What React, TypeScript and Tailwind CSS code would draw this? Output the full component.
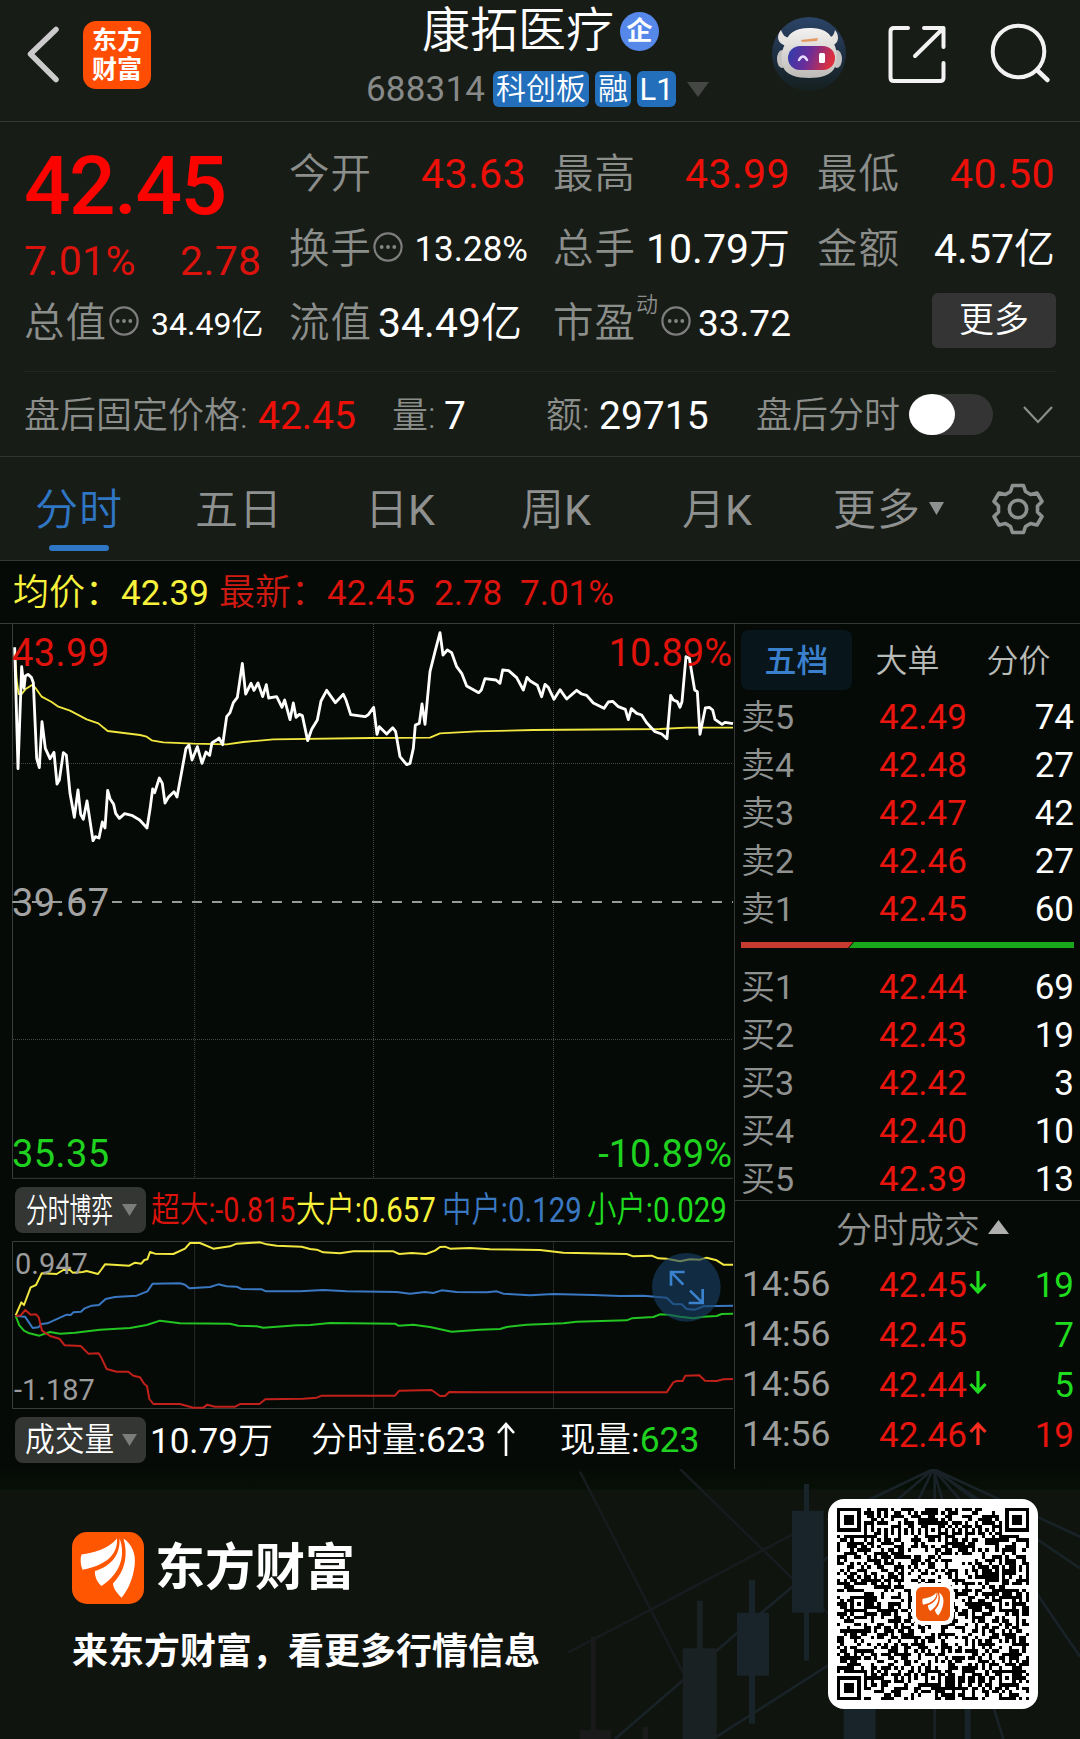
import React from "react";

type Tone = "red" | "green" | "white";

const toneClass: Record<Tone, string> = {
  red: "text-[#e8140e]",
  green: "text-[#1fdc1f]",
  white: "text-white",
};

const asks = [
  ["卖5", "42.49", "74"],
  ["卖4", "42.48", "27"],
  ["卖3", "42.47", "42"],
  ["卖2", "42.46", "27"],
  ["卖1", "42.45", "60"],
];

const bids = [
  ["买1", "42.44", "69"],
  ["买2", "42.43", "19"],
  ["买3", "42.42", "3"],
  ["买4", "42.40", "10"],
  ["买5", "42.39", "13"],
];

const trades: { price: string; dir: "up" | "down" | ""; qty: string; tone: Tone }[] = [
  { price: "42.45", dir: "down", qty: "19", tone: "green" },
  { price: "42.45", dir: "", qty: "7", tone: "green" },
  { price: "42.44", dir: "down", qty: "5", tone: "green" },
  { price: "42.46", dir: "up", qty: "19", tone: "red" },
];

const QR_SIZE = 57;

/* Module grid of a version 10 code: finders, timing, alignment marks and data. */
function qrPath(): string {
  const n = QR_SIZE;
  const cells: number[][] = [];
  let seed = 20240611;
  const rnd = () => {
    seed = (seed * 1103515245 + 12345) % 2147483648;
    return seed / 2147483648;
  };
  for (let y = 0; y < n; y++) {
    cells.push([]);
    for (let x = 0; x < n; x++) cells[y].push(rnd() < 0.5 ? 1 : 0);
  }
  for (let i = 0; i < n; i++) {
    cells[6][i] = i % 2 === 0 ? 1 : 0;
    cells[i][6] = i % 2 === 0 ? 1 : 0;
  }
  const ring = (cx: number, cy: number, r: number, dark: (d: number) => boolean) => {
    for (let y = cy - r; y <= cy + r; y++)
      for (let x = cx - r; x <= cx + r; x++)
        if (y >= 0 && x >= 0 && y < n && x < n)
          cells[y][x] = dark(Math.max(Math.abs(x - cx), Math.abs(y - cy))) ? 1 : 0;
  };
  const marks = [6, 28, 50];
  marks.forEach((cy) =>
    marks.forEach((cx) => {
      ring(cx, cy, 2, (d) => d !== 1);
    }),
  );
  [
    [3, 3],
    [n - 4, 3],
    [3, n - 4],
  ].forEach(([cx, cy]) => ring(cx, cy, 4, (d) => d < 2 || d === 3));
  let d = "";
  for (let y = 0; y < n; y++)
    for (let x = 0; x < n; x++) if (cells[y][x]) d += `M${x} ${y}h1v1h-1z`;
  return d;
}

const qrData = qrPath();

/* Latin letters and digits take the regular weight, ideographs keep the lighter one. */
function Mix({ text }: { text: string }) {
  return (
    <>
      {text.split(/([0-9A-Z.%:\-]+)/).map((part, i) =>
        i % 2 === 1 ? (
          <span key={i} className="font-normal">
            {part}
          </span>
        ) : (
          part
        ),
      )}
    </>
  );
}

function Feather({ className }: { className?: string }) {
  return (
    <svg viewBox="0 0 72 72" className={className} fill="#fff">
      <path d="M10.500 37.700C8.500 33 8 27 9.500 22.500C22 20.500 35 18 45 6.500C46 20 37 33 10.500 37.700Z" />
      <path d="M47.500 6.500C53 20 51 40 29.500 54C25 50 22.500 44.500 23 39C40 34 48.500 22 47.500 6.500Z" />
      <path d="M51.500 6.500C60 12 64 22 62.700 33C61 47 56 58 49.500 65.800C45 61 41.500 57 41 51.500C54 38 56 22 51.500 6.500Z" />
    </svg>
  );
}

function Info() {
  return (
    <svg viewBox="0 0 30 30" className="size-[30px] shrink-0">
      <circle cx="15" cy="15" r="13.600" fill="none" stroke="#7e7e7e" strokeWidth="2.200" />
      <circle cx="8.700" cy="15" r="1.900" fill="#858585" />
      <circle cx="15" cy="15" r="1.900" fill="#858585" />
      <circle cx="21.300" cy="15" r="1.900" fill="#858585" />
    </svg>
  );
}

function Triangle({ className }: { className: string }) {
  return (
    <svg viewBox="0 0 10 10" preserveAspectRatio="none" className={className}>
      <path d="M0 0H10L5 10Z" fill="currentColor" />
    </svg>
  );
}

function Robot() {
  return (
    <svg viewBox="0 0 76 76" className="size-[76px]">
      <defs>
        <linearGradient id="disc" x1="0" y1="0" x2="0" y2="1">
          <stop offset="0" stopColor="#2b4468" />
          <stop offset="0.600" stopColor="#1c2c3c" />
          <stop offset="1" stopColor="#15201f" />
        </linearGradient>
        <linearGradient id="visor" x1="0" y1="0" x2="1" y2="0.200">
          <stop offset="0" stopColor="#2b3eae" />
          <stop offset="0.500" stopColor="#6a2d98" />
          <stop offset="1" stopColor="#dc3040" />
        </linearGradient>
        <linearGradient id="shell" x1="0" y1="0" x2="0" y2="1">
          <stop offset="0" stopColor="#f4f2f0" />
          <stop offset="1" stopColor="#bdbab8" />
        </linearGradient>
      </defs>
      <circle cx="38" cy="38" r="37" fill="url(#disc)" />
      <path d="M10 14C5 20 6 28 16 30L21 22C14 22 12 19 10 14Z" fill="#e5e2df" />
      <path d="M64 14C69 20 68 28 60 30L55 22C61 22 63 19 64 14Z" fill="#e5e2df" />
      <ellipse cx="11" cy="43" rx="5" ry="9" fill="#c4c2c0" />
      <ellipse cx="66" cy="43" rx="5" ry="9" fill="#c4c2c0" />
      <path
        d="M38 12C54 12 60 17 63 28C66 34 67 42 64 51C61 59 50 62 38 62C26 62 15 59 12 51C9 42 11 34 14 28C17 17 24 12 38 12Z"
        fill="url(#shell)"
      />
      <path d="M30 24L47 22L46 25L31 26Z" fill="#e39a62" />
      <rect x="17" y="30" width="47" height="24" rx="12" fill="url(#visor)" />
      <path d="M28 44Q32 37 36 44" fill="none" stroke="#e6dcff" strokeWidth="2.500" strokeLinecap="round" />
      <rect x="48" y="37" width="6" height="10" rx="1.500" fill="#fff" />
    </svg>
  );
}

function Header() {
  return (
    <header className="relative flex h-[122px] items-start border-b border-[#343834] bg-[#181c17]">
      <svg viewBox="0 0 40 60" className="mt-6 ml-[23px] h-[60px] w-10" fill="none">
        <path d="M33 5.500L7.500 30L33 55.500" stroke="#cbcbcb" strokeWidth="5.500" strokeLinecap="round" strokeLinejoin="round" />
      </svg>
      <div className="mt-[21px] ml-5 flex h-[68px] w-[68px] flex-col items-center justify-center rounded-[13px] bg-[#ff4e04] text-[25px] leading-[29px] font-bold text-white">
        <span>东方</span>
        <span>财富</span>
      </div>
      <div className="ml-[214px] flex w-[360px] flex-col">
        <div className="flex h-[62px] items-center pl-[57px] text-[48px] leading-none">
          <span className="w-[192px] whitespace-nowrap text-white">康拓医疗</span>
          <span className="ml-[6px] flex size-[39px] items-center justify-center rounded-full bg-[#5688ea] text-[26px] font-bold text-white">
            企
          </span>
        </div>
        <div className="mt-[9px] flex h-[36px] items-center text-[30px] leading-none text-white">
          <span className="w-[128px] pl-px text-[35px] tracking-[0.2px] text-[#878a88]">
            <Mix text="688314" />
          </span>
          <span className="flex h-9 w-24 items-center justify-center rounded-md bg-[#236fbb]">科创板</span>
          <span className="ml-1.5 flex h-9 w-9 items-center justify-center rounded-md bg-[#236fbb]">融</span>
          <span className="ml-1.5 flex h-9 w-[39px] items-center justify-center rounded-md bg-[#236fbb] text-[31px]">
            <Mix text="L1" />
          </span>
          <Triangle className="ml-[11px] h-[15px] w-[22px] text-[#454745]" />
        </div>
      </div>
      <div className="mt-4 ml-[46px] flex items-start">
        <Robot />
      </div>
      <svg viewBox="0 0 64 64" className="mt-[22px] ml-9 size-16" fill="none" stroke="#f2f2f2" strokeWidth="4" strokeLinecap="round">
        <path d="M25 6H11Q7.500 6 7.500 9.500V55.500Q7.500 59 11 59H57Q60.500 59 60.500 56V41" />
        <path d="M41 6H60.500V25M60 6.500L32 34" strokeLinejoin="round" />
      </svg>
      <svg viewBox="0 0 64 64" className="mt-[22px] ml-[42px] size-16" fill="none" stroke="#f2f2f2" strokeLinecap="round">
        <circle cx="29.500" cy="29.500" r="25.800" strokeWidth="4" />
        <path d="M48 48L58.500 58" strokeWidth="4.500" />
      </svg>
    </header>
  );
}

function Label({ children }: { children: React.ReactNode }) {
  return (
    <span className="w-[83px] shrink-0 text-[40.500px] tracking-[1px] whitespace-nowrap text-[#8b8e8b]">{children}</span>
  );
}

function Quote() {
  return (
    <section className="h-[335px] border-b border-[#313431] bg-[#181c17] px-6 leading-none">
      <div className="grid h-[249px] grid-cols-[265px_264px_264px_239px] grid-rows-[105px_45px_99px]">
        <div className="flex items-center pt-[22px] text-[82px] font-medium tracking-[-1.500px] text-[#fb0400]">42.45</div>
        <div className="flex items-center">
          <Label>今开</Label>
          <span className="w-[154px] text-right text-[41px] tracking-[0.4px] text-[#ec1008]">
            <Mix text="43.63" />
          </span>
        </div>
        <div className="flex items-center">
          <Label>最高</Label>
          <span className="w-[154px] text-right text-[41px] tracking-[0.4px] text-[#ec1008]">
            <Mix text="43.99" />
          </span>
        </div>
        <div className="flex items-center">
          <Label>最低</Label>
          <span className="w-[155px] text-right text-[41px] tracking-[0.4px] text-[#ec1008]">
            <Mix text="40.50" />
          </span>
        </div>
        <div className="flex items-start pt-[14px] text-[41px] tracking-[0.4px] text-[#dc120c]">
          <span className="w-[156px]">
            <Mix text="7.01%" />
          </span>
          <span>
            <Mix text="2.78" />
          </span>
        </div>
        <div className="flex items-center">
          <Label>换手</Label>
          <span className="mb-1.5 ml-px flex">
            <Info />
          </span>
          <span className="w-[125px] text-right text-[35px] text-white">
            <Mix text="13.28%" />
          </span>
        </div>
        <div className="flex items-center">
          <Label>总手</Label>
          <span className="w-[154px] text-right text-[41px] whitespace-nowrap text-white">
            <Mix text="10.79万" />
          </span>
        </div>
        <div className="flex items-center">
          <Label>金额</Label>
          <span className="w-[155px] text-right text-[41px] whitespace-nowrap text-white">
            <Mix text="4.57亿" />
          </span>
        </div>
        <div className="flex items-center pt-1">
          <Label>总值</Label>
          <span className="mb-1.5 ml-0.5 flex">
            <Info />
          </span>
          <span className="ml-3 text-[32px] whitespace-nowrap text-white">
            <Mix text="34.49亿" />
          </span>
        </div>
        <div className="flex items-center pt-1">
          <Label>流值</Label>
          <span className="ml-1.5 text-[41px] whitespace-nowrap text-white">
            <Mix text="34.49亿" />
          </span>
        </div>
        <div className="flex items-center pt-1">
          <Label>市盈</Label>
          <span className="mb-[38px] w-[25px] text-[22px] text-[#8b8e8b]">动</span>
          <span className="mb-1.5 flex">
            <Info />
          </span>
          <span className="ml-[7px] text-[37px] text-white">
            <Mix text="33.72" />
          </span>
        </div>
        <div className="flex items-center justify-end">
          <span className="mb-0.5 flex h-[55px] w-[124px] items-center justify-center rounded-md bg-[#333433] text-[35px] text-white">更多</span>
        </div>
      </div>
      <div className="flex h-[86px] items-center border-t border-[#232623] text-[36px] whitespace-nowrap text-[#8b8e8b]">
        <span className="w-[234px] pt-[3px]">盘后固定价格:</span>
        <span className="w-[134px] pt-[3px] text-[39px] text-[#ec1008]">
          <Mix text="42.45" />
        </span>
        <span className="w-[52px] pt-[3px]">量:</span>
        <span className="w-[102px] pt-[3px] text-[39px] text-white">
          <Mix text="7" />
        </span>
        <span className="w-[53px] pt-[3px]">额:</span>
        <span className="w-[157px] pt-[3px] text-[39px] text-white">
          <Mix text="29715" />
        </span>
        <span className="w-[153px] pt-[3px]">盘后分时</span>
        <span className="flex h-[41px] w-[84px] rounded-full bg-[#333433]">
          <span className="h-full w-[46px] rounded-[50%] bg-white" />
        </span>
        <svg viewBox="0 0 30 18" className="ml-[30px] h-[18px] w-[30px]" fill="none" stroke="#8b8e8b" strokeWidth="2.200">
          <path d="M1 1L15 16L29 1" />
        </svg>
      </div>
    </section>
  );
}

function Tabs() {
  return (
    <nav className="flex h-[104px] items-center border-b border-[#343734] bg-[#181c17] text-[43px] leading-none whitespace-nowrap text-[#8e918f]">
      <span className="relative ml-[35px] w-[160px] pt-1 tracking-[1px] text-[#2f76c4]">
        分时
        <span className="absolute top-[60px] left-[14px] h-1.5 w-[60px] rounded-full bg-[#2f76c4]" />
      </span>
      <span className="w-[170px] pt-1 tracking-[1px]">五日</span>
      <span className="w-[156px] pt-1">
        <Mix text="日K" />
      </span>
      <span className="w-[161px] pt-1">
        <Mix text="周K" />
      </span>
      <span className="w-[151px] pt-1">
        <Mix text="月K" />
      </span>
      <span className="pt-1 tracking-[1px]">更多</span>
      <Triangle className="ml-[8px] h-[13px] w-[15px] text-[#8e918f]" />
      <svg viewBox="-26 -26 52 52" className="ml-[48px] size-[52px]" fill="none" stroke="#8e918f" strokeWidth="3.600" strokeLinejoin="round">
        <path d="M-5.500 -23.500H5.500L7.500 -17.500L12.500 -14.500L19 -16L24 -7.500L19.500 -3V3L24 7.500L19 16L12.500 14.500L7.500 17.500L5.500 23.500H-5.500L-7.500 17.500L-12.500 14.500L-19 16L-24 7.500L-19.500 3V-3L-24 -7.500L-19 -16L-12.500 -14.500L-7.500 -17.500Z" />
        <circle r="8.700" />
      </svg>
    </nav>
  );
}

function PriceChart() {
  return (
    <div className="relative h-[556px] text-[38px] leading-none">
      <svg viewBox="0 9 2205 1668" className="block h-[556px] w-[735px]" fill="none">
        <g stroke="#3a3d3a" strokeWidth="3">
          <path d="M0 10.500H2205M37.500 10.500V1675M37 1675H2199" />
          <path d="M584 12V1674M1120.500 12V1674M1660.500 12V1674M39 430.500H2199M39 1258.500H2199" strokeDasharray="3 3" stroke="#454845" />
        </g>
        <path d="M37 846H2199" stroke="#9a9a9a" strokeWidth="6" strokeDasharray="30 30" strokeDashoffset="1" />
        <g strokeWidth="5.500" stroke="#f0e840" strokeLinejoin="round">
          <polyline points="46,110 50,180 56,222 64,223 76,208 96,195 106,203 125,230 155,246 175,260 210,272 260,298 295,310 323,333 420,345 440,350 455,361 490,367 580,371 680,373 730,366 820,358 1110,354 1290,353 1320,340 1430,334 1600,330 1980,327 2060,323 2199,323" />
        </g>
        <g strokeWidth="8.500" stroke="#fff" strokeLinejoin="round">
          <polyline points="44,82 54,446 65,140 72,205 76,168 84,163 94,172 100,188 110,415 118,443 126,305 136,385 150,416 162,397 171,492 178,480 190,398 199,405 210,520 223,592 234,510 242,583 250,598 261,543 279,662 286,650 297,654 307,606 315,624 323,511 330,536 341,553 347,580 358,595 374,581 395,586 419,600 441,624 450,568 458,507 464,518 478,474 487,490 495,549 505,532 522,515 531,531 545,455 558,385 567,375 576,420 592,380 606,430 618,396 629,406 636,368 650,360 657,354 668,374 680,290 690,278 700,248 712,232 727,130 737,222 753,190 762,211 774,189 788,230 799,194 806,234 830,230 846,262 854,240 870,299 880,249 888,292 898,283 907,287 923,362 935,328 952,300 963,243 980,211 1006,248 1030,223 1038,240 1052,284 1095,290 1105,284 1121,262 1131,343 1138,320 1160,342 1178,323 1187,335 1200,410 1220,434 1230,430 1240,385 1246,315 1258,310 1266,252 1275,313 1290,155 1305,95 1320,38 1329,105 1342,90 1355,98 1370,140 1385,160 1400,198 1436,218 1444,210 1455,176 1488,180 1500,190 1508,150 1526,152 1550,173 1570,210 1581,172 1592,184 1612,196 1625,230 1635,193 1645,202 1662,238 1680,209 1700,237 1730,211 1745,222 1760,226 1780,249 1812,265 1825,246 1838,244 1855,260 1876,268 1885,299 1894,266 1910,280 1925,285 1940,308 1965,335 1985,342 2001,356 2012,226 2020,240 2032,245 2040,262 2046,245 2058,110 2068,115 2084,210 2092,215 2100,343 2116,264 2128,262 2138,270 2145,298 2166,313 2175,307 2199,311" />
        </g>
      </svg>
      <span className="absolute top-[11px] left-[12px] tracking-[0.4px] text-[#e1120c]">
        <Mix text="43.99" />
      </span>
      <span className="absolute top-[11px] right-[2px] text-[#e1120c]">
        <Mix text="10.89%" />
      </span>
      <span className="absolute top-[261px] left-[12px] tracking-[0.4px] text-[#a3a3a3]">
        <Mix text="39.67" />
      </span>
      <span className="absolute top-[512px] left-[12px] tracking-[0.4px] text-[#1fd21f]">
        <Mix text="35.35" />
      </span>
      <span className="absolute top-[512px] right-[2px] text-[#1fd21f]">
        <Mix text="-10.89%" />
      </span>
    </div>
  );
}

function FlowLegend() {
  return (
    <div className="flex h-[62px] items-center text-[35px] leading-none whitespace-nowrap">
      <span className="ml-[15px] flex h-[46px] w-[131px] items-center rounded-lg bg-[#343634] pl-[11px] text-white">
        <span className="w-[96px] text-[33px]">
          <span className="inline-block origin-left scale-x-[0.66]">分时博弈</span>
        </span>
        <Triangle className="h-3 w-[15px] text-[#7b7d7b]" />
      </span>
      <span className="ml-[5px] w-[145px] text-[#dc120c]">
        <span className="inline-block origin-left scale-x-[0.82]">
          <Mix text="超大:-0.815" />
        </span>
      </span>
      <span className="w-[146px] text-[#f8f23c]">
        <span className="inline-block origin-left scale-x-[0.84]">
          <Mix text="大户:0.657" />
        </span>
      </span>
      <span className="w-[145px] text-[#3a78c2]">
        <span className="inline-block origin-left scale-x-[0.84]">
          <Mix text="中户:0.129" />
        </span>
      </span>
      <span className="w-[140px] text-[#1fdc1f]">
        <span className="inline-block origin-left scale-x-[0.84]">
          <Mix text="小户:0.029" />
        </span>
      </span>
    </div>
  );
}

function FlowChart() {
  return (
    <div className="relative h-[169px] text-[29px] leading-none text-[#9c9c9c]">
      <svg viewBox="0 213 2205 507" className="block h-[169px] w-[735px]" fill="none">
        <path d="M37.500 214.500H2199M37.500 214.500V715.500M37.500 715.500H2199" stroke="#3a3d3a" strokeWidth="3" />
        <path d="M584 214V715M1120.500 214V715M1660.500 214V715" stroke="#454845" strokeWidth="3" strokeDasharray="3 3" />
        <g strokeWidth="6" strokeLinejoin="round">
          <polyline
            stroke="#f0e840"
            points="47,436 64,397 72,405 92,352 108,345 125,310 170,312 190,300 210,300 218,308 248,306 260,303 294,312 303,300 315,283 388,287 405,278 424,281 433,270 442,268 450,246 465,251 520,252 555,236 570,219 600,219 640,236 690,229 710,221 780,217 800,223 830,227 905,230 930,237 950,239 970,247 1020,250 1060,244 1180,244 1198,252 1235,249 1278,252 1305,242 1320,231 1335,230 1350,236 1410,234 1470,238 1620,240 1690,248 1880,252 1900,259 1955,257 1975,265 2000,266 2040,274 2070,268 2100,269 2120,263 2150,271 2170,284 2199,284"
          />
          <polyline
            stroke="#3a78c2"
            points="47,438 75,440 98,474 115,472 124,462 142,460 200,434 212,435 220,427 243,425 254,415 275,407 297,405 317,387 345,381 410,377 442,364 458,341 540,340 555,344 568,355 630,351 655,343 680,349 710,350 725,357 785,358 798,364 900,364 970,360 1040,364 1190,366 1230,371 1275,366 1300,369 1325,361 1370,366 1460,367 1490,364 1510,371 1590,376 1660,372 1780,375 1860,378 1930,377 2000,383 2020,402 2045,403 2060,417 2085,419 2110,409 2199,407"
          />
          <polyline
            stroke="#22c522"
            points="47,438 58,466 72,482 88,490 118,497 150,486 180,491 225,488 300,479 390,474 440,465 480,452 510,456 540,460 690,461 715,467 770,469 790,473 890,466 930,465 990,459 1185,461 1195,467 1240,464 1290,471 1355,485 1440,479 1500,477 1520,471 1580,464 1690,460 1730,455 1880,451 1895,445 1960,441 1980,433 2005,434 2040,440 2080,445 2110,440 2150,438 2165,432 2199,431"
          />
          <polyline
            stroke="#c2201a"
            points="47,438 62,436 76,420 92,434 108,433 116,442 126,482 150,498 178,506 194,526 242,528 265,551 296,550 305,565 320,597 350,605 385,605 400,617 420,622 433,642 441,648 448,687 460,702 540,702 580,713 610,713 622,704 645,710 706,710 720,702 778,702 796,688 910,686 950,683 965,677 1185,677 1198,662 1295,660 1320,678 1335,678 1348,666 1460,667 2000,667 2020,637 2030,633 2048,633 2056,617 2098,616 2115,632 2150,633 2170,628 2199,627"
          />
        </g>
        <circle cx="2059" cy="352" r="103" fill="#174068" fillOpacity="0.62" />
        <path d="M2013 347V306H2054M2015 308L2050 344M2108 357V399H2066M2070 362L2106 397" stroke="#3a82cc" strokeWidth="8" />
      </svg>
      <span className="absolute top-[9px] left-[15px]">
        <Mix text="0.947" />
      </span>
      <span className="absolute top-[135px] left-[14px]">
        <Mix text="-1.187" />
      </span>
    </div>
  );
}

function VolumeRow() {
  return (
    <div className="flex h-[59px] items-center text-[36px] leading-none whitespace-nowrap text-white">
      <span className="ml-[15px] flex h-[46px] w-[131px] items-center rounded-lg bg-[#343634] pl-2.5">
        <span className="w-[97px] text-[33px]">
          <span className="inline-block origin-left scale-x-[0.9]">成交量</span>
        </span>
        <Triangle className="h-3 w-[15px] text-[#7b7d7b]" />
      </span>
      <span className="ml-[4px] w-[161px] pt-[3px] text-[35px]">
        <Mix text="10.79万" />
      </span>
      <span className="w-[186px] pt-[3px] text-[35.500px]">
        <Mix text="分时量:623" />
      </span>
      <svg viewBox="0 0 18 36" className="h-9 w-[18px]" fill="none" stroke="#fff" strokeWidth="2.600">
        <path d="M9 34V3M1 11L9 2L17 11" />
      </svg>
      <span className="ml-[45px] pt-[3px] text-[35.500px]">
        <Mix text="现量:" />
        <span className="text-[#1fd21f]">
          <Mix text="623" />
        </span>
      </span>
    </div>
  );
}

function BookRow({ row }: { row: string[] }) {
  return (
    <div className="flex h-12 shrink-0 items-center">
      <span className="-ml-0.5 w-[138px] text-[34px] text-[#8f9290]">
        <Mix text={row[0]} />
      </span>
      <span className="w-[91px] text-[35px] text-[#e8140e]">
        <Mix text={row[1]} />
      </span>
      <span className="flex-1 text-right text-[35px] text-white">
        <Mix text={row[2]} />
      </span>
    </div>
  );
}

function OrderBook() {
  return (
    <aside className="w-[346px] border-t border-l border-[#343734] leading-none whitespace-nowrap">
      <div className="flex h-[577px] flex-col border-b border-[#343734] pr-1.5 pl-2">
        <div className="-ml-0.5 flex h-[69px] shrink-0 items-center pt-0.5 text-[32px] text-[#b9bbb9]">
          <span className="flex h-[60px] w-[111px] items-center justify-center rounded-lg bg-[#08151a] pt-0.5 font-medium text-[#3a80cc]">五档</span>
          <span className="w-[111px] pt-0.5 text-center">大单</span>
          <span className="w-[111px] pt-0.5 text-center">分价</span>
        </div>
        {asks.map((row) => (
          <BookRow key={row[0]} row={row} />
        ))}
        <div className="-ml-0.5 flex h-[30px] shrink-0 items-start pt-[9px]">
          <svg viewBox="0 0 333 6" className="h-1.5 w-[333px]">
            <path d="M0 0H112L107 6H0Z" fill="#c63a30" />
            <path d="M113 0H333V6H108Z" fill="#1aa61a" />
          </svg>
        </div>
        {bids.map((row) => (
          <BookRow key={row[0]} row={row} />
        ))}
      </div>
      <div className="flex h-[59px] items-center pl-[101px] text-[36px] text-[#8f9290]">
        分时成交
        <Triangle className="mb-2 ml-[8px] h-[14px] w-[21px] rotate-180 text-[#b0b0b0]" />
      </div>
      <div className="flex flex-col pr-1.5 pl-2 text-[35px]">
        {trades.map((t, i) => (
          <div key={i} className="flex h-[50px] items-center">
            <span className="-ml-px w-[137px] text-[35.500px] text-[#9b9d9c]">
              <Mix text="14:56" />
            </span>
            <span className="w-[90px] text-[35px] text-[#e8140e]">
              <Mix text={t.price} />
            </span>
            <span className="flex w-5 pb-1">
              {t.dir && (
                <svg
                  viewBox="0 0 18 24"
                  className={t.dir === "up" ? "h-6 w-[18px] rotate-180" : "h-6 w-[18px]"}
                  fill="none"
                  stroke={t.dir === "up" ? "#fa2c20" : "#1fdc1f"}
                  strokeWidth="3.200"
                >
                  <path d="M9 0V21M1.500 13L9 21L16.500 13" />
                </svg>
              )}
            </span>
            <span className={`flex-1 text-right text-[35px] ${toneClass[t.tone]}`}>
              <Mix text={t.qty} />
            </span>
          </div>
        ))}
      </div>
    </aside>
  );
}

function Footer() {
  return (
    <footer className="relative flex h-[270px] justify-between bg-[linear-gradient(#070a06_0px,#061006_20px,#0f140f_21px)]">
      <svg viewBox="0 27 1560 810" className="absolute top-0 right-0 h-[270px] w-[520px]" fill="none">
        <g stroke="#182227" strokeWidth="8">
          <path d="M60 35L370 640M360 27L804 460" stroke="#171b1d" />
          <path d="M25 577L270 450L610 270L700 222" stroke="#171b1d" />
          <path d="M165 837L370 660L530 520L700 378L804 290M470 830L804 616" />
          <path d="M1120 27L800 180M1120 27L1000 130M1120 27L1070 130M1124 27V837M1120 27L1150 130M1120 27L1210 130M1120 27L1260 130M1120 27L1560 230M1120 27L1560 325M1430 400L1560 590M1300 740L1330 837" />
        </g>
        <g fill="#18232a">
          <path d="M732 72H747V152H791V458H747V602H732V458H696V152H732Z" />
          <path d="M567 360H585V458H627V647H585V791H567V647H531V458H567Z" />
          <path d="M851 740H947V837H851ZM1214 740H1232V837H1214Z" />
        </g>
        <path d="M411 422H428V565H470V837H368V565H411Z" fill="#1a2123" />
        <path d="M92 530H107V810H152V837H60V810H92ZM247 800H264V837H247Z" fill="#1a1a1b" />
      </svg>
      <div className="relative flex flex-col items-start pt-[63px] pl-[72px]">
        <div className="flex h-[72px] items-center">
          <span className="flex size-[72px] rounded-[15px] bg-[#ff5602]">
            <Feather className="size-[72px]" />
          </span>
          <span className="ml-[11px] text-[50px] leading-none font-bold whitespace-nowrap text-white">东方财富</span>
        </div>
        <p className="mt-[28px] text-[36px] leading-[40px] font-bold whitespace-nowrap text-white">来东方财富，看更多行情信息</p>
      </div>
      <div className="relative mt-[30px] mr-[42px] flex size-[210px] items-center justify-center rounded-2xl bg-white">
        <svg viewBox="0 0 57 57" className="size-[192px]" shapeRendering="crispEdges">
          <path d={qrData} fill="#000" />
        </svg>
        <span className="absolute top-[84px] left-[84px] flex size-[42px] items-center justify-center rounded-[9px] bg-white">
          <span className="flex size-[34px] items-center justify-center rounded-[6px] bg-[#ee5708]">
            <Feather className="size-[28px]" />
          </span>
        </span>
      </div>
    </footer>
  );
}

export default function App() {
  return (
    <div className="h-[1739px] w-[1080px] overflow-hidden bg-[#060a06] font-[Roboto,'Noto_Sans_CJK_SC',sans-serif] [font-weight:350]">
      <Header />
      <Quote />
      <Tabs />
      <div className="flex h-[62px] items-center pt-0.5 pl-[13px] text-[36px] leading-none whitespace-nowrap">
        <span className="text-[#f8f23c]">均价：</span>
        <span className="w-[98px] text-[35px] text-[#f8f23c]">
          <Mix text="42.39" />
        </span>
        <span className="text-[#cf1a12]">最新：</span>
        <span className="w-[107px] text-[35px] text-[#dc120c]">
          <Mix text="42.45" />
        </span>
        <span className="w-[86px] text-[35px] text-[#dc120c]">
          <Mix text="2.78" />
        </span>
        <span className="text-[35px] text-[#dc120c]">
          <Mix text="7.01%" />
        </span>
      </div>
      <div className="flex h-[846px]">
        <div className="w-[734px]">
          <PriceChart />
          <FlowLegend />
          <FlowChart />
          <VolumeRow />
        </div>
        <OrderBook />
      </div>
      <Footer />
    </div>
  );
}
